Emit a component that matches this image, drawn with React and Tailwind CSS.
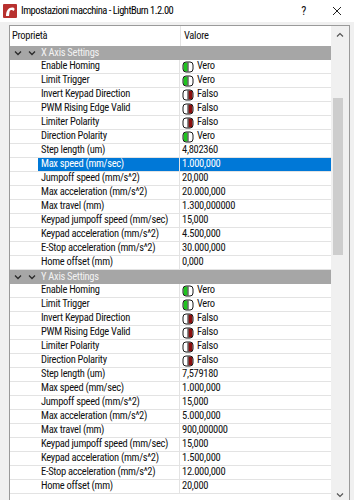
import React from "react";

const xRows = [
  ["Enable Homing", true],
  ["Limit Trigger", true],
  ["Invert Keypad Direction", false],
  ["PWM Rising Edge Valid", false],
  ["Limiter Polarity", false],
  ["Direction Polarity", true],
  ["Step length (um)", "4,802360"],
  ["Max speed (mm/sec)", "1.000,000", true],
  ["Jumpoff speed (mm/s^2)", "20,000"],
  ["Max acceleration (mm/s^2)", "20.000,000"],
  ["Max travel (mm)", "1.300,000000"],
  ["Keypad jumpoff speed (mm/sec)", "15,000"],
  ["Keypad acceleration (mm/s^2)", "4.500,000"],
  ["E-Stop acceleration (mm/s^2)", "30.000,000"],
  ["Home offset (mm)", "0,000"],
];

const yRows = [
  ["Enable Homing", true],
  ["Limit Trigger", true],
  ["Invert Keypad Direction", false],
  ["PWM Rising Edge Valid", false],
  ["Limiter Polarity", false],
  ["Direction Polarity", false],
  ["Step length (um)", "7,579180"],
  ["Max speed (mm/sec)", "1.000,000"],
  ["Jumpoff speed (mm/s^2)", "15,000"],
  ["Max acceleration (mm/s^2)", "5.000,000"],
  ["Max travel (mm)", "900,000000"],
  ["Keypad jumpoff speed (mm/sec)", "15,000"],
  ["Keypad acceleration (mm/s^2)", "1.500,000"],
  ["E-Stop acceleration (mm/s^2)", "12.000,000"],
  ["Home offset (mm)", "20,000"],
];

function Toggle({ on }) {
  return (
    <svg width="12" height="12" viewBox="0 0 12 12" className="shrink-0">
      <rect x="1" y="1" width="10" height="10" rx="3" fill="#fff" />
      {on ? (
        <path d="M5.5 1.5 H3.5 Q1.5 1.5 1.5 3.5 V8.5 Q1.5 10.5 3.5 10.5 H5.5 Z" fill="#1fc41f" />
      ) : (
        <path d="M6.5 1.5 H8.5 Q10.5 1.5 10.5 3.5 V8.5 Q10.5 10.5 8.5 10.5 H6.5 Z" fill="#8a0f0f" />
      )}
      <rect x="1" y="1" width="10" height="10" rx="3" fill="none" stroke="#1a1a1a" strokeWidth="1" />
      <line x1="6" y1="1.5" x2="6" y2="10.5" stroke="#1a1a1a" strokeWidth="1" />
    </svg>
  );
}

function Chevron() {
  return (
    <svg width="8" height="6" viewBox="0 0 8 6">
      <path d="M1 1.5 L4 4.5 L7 1.5" fill="none" stroke="#2a2a2a" strokeWidth="1.3" />
    </svg>
  );
}

function Section({ title }) {
  return (
    <div className="flex h-[14px] shrink-0 items-center bg-[#a6a6a6]">
      <div className="flex w-[28px] items-center gap-[6px] pl-[4px]">
        <Chevron />
        <Chevron />
      </div>
      <span className="whitespace-nowrap pl-[3px] text-[#f2f2f2]">{title}</span>
    </div>
  );
}

function Row({ name, value, selected }) {
  const isBool = typeof value === "boolean";
  return (
    <div className="flex h-[14px] shrink-0 border-b border-[#e3e3e3]">
      <div className="w-[28px] shrink-0 bg-white" />
      <div
        className={
          selected
            ? "flex flex-1 items-center bg-[#0078d7] text-white"
            : "flex flex-1 items-center"
        }
      >
        <div className="flex h-full w-[142px] shrink-0 items-center whitespace-nowrap border-r border-[#e3e3e3] pl-[3px]">
          {name}
        </div>
        <div className="flex items-center gap-[3px] whitespace-nowrap pl-[2px]">
          {isBool ? (
            <>
              <Toggle on={value} />
              <span>{value ? "Vero" : "Falso"}</span>
            </>
          ) : (
            <span>{value}</span>
          )}
        </div>
      </div>
    </div>
  );
}

export default function App() {
  return (
    <div
      className="relative h-[500px] w-[354px] overflow-hidden bg-[#f0f0f0] text-[10.5px] leading-none tracking-[-0.3px] text-[#111]"
      style={{ fontFamily: '"Roboto Condensed", Roboto, sans-serif' }}
    >
      <div className="flex h-[22px] items-center bg-white">
        <svg width="14" height="14" viewBox="0 0 14 14" className="ml-[3px]">
          <rect x="0" y="0" width="14" height="14" rx="1" fill="#b8312f" />
          <path d="M3 12 C3 6 6 3 10 3.5 C12 4 12 6 10.5 7 C9 5.5 7 5.8 6.5 8 L6 12 Z" fill="#fff" />
        </svg>
        <span className="ml-[4px] whitespace-nowrap text-[10.5px] tracking-[-0.5px] text-[#000]">
          Impostazioni macchina - LightBurn 1.2.00
        </span>
        <span className="ml-auto mr-[26px] text-[12px]">?</span>
        <svg width="10" height="10" viewBox="0 0 10 10" className="mr-[12px]">
          <path d="M1 1 L9 9 M9 1 L1 9" stroke="#222" strokeWidth="1" />
        </svg>
      </div>
      <div className="pl-[9px] pr-[4px] pt-[3px]">
        <div className="flex h-[480px] border border-[#9a9a9a] bg-white">
          <div className="flex w-[322px] flex-col">
            <div className="flex h-[20px] shrink-0 items-center">
              <div className="w-[170px] shrink-0 pl-[2px]">Proprietà</div>
              <div className="h-full border-l border-[#e3e3e3]" />
              <div className="pl-[3px]">Valore</div>
            </div>
            <Section title="X Axis Settings" />
            {xRows.map(([n, v, s], i) => (
              <Row key={"x" + i} name={n} value={v} selected={s} />
            ))}
            <Section title="Y Axis Settings" />
            {yRows.map(([n, v, s], i) => (
              <Row key={"y" + i} name={n} value={v} selected={s} />
            ))}
          </div>
          <div className="relative flex w-[18px] flex-col bg-[#f0f0f0]">
            <div className="flex h-[18px] items-center justify-center">
              <svg width="8" height="6" viewBox="0 0 8 6">
                <path d="M1 4.5 L4 1.5 L7 4.5" fill="none" stroke="#555" strokeWidth="1.2" />
              </svg>
            </div>
            <div className="ml-[2px] mt-[54px] h-[157px] w-[10px] bg-[#cdcdcd]" />
            <div className="mt-auto flex h-[18px] items-center justify-center">
              <svg width="8" height="6" viewBox="0 0 8 6">
                <path d="M1 1.5 L4 4.5 L7 1.5" fill="none" stroke="#555" strokeWidth="1.2" />
              </svg>
            </div>
          </div>
        </div>
      </div>
    </div>
  );
}
